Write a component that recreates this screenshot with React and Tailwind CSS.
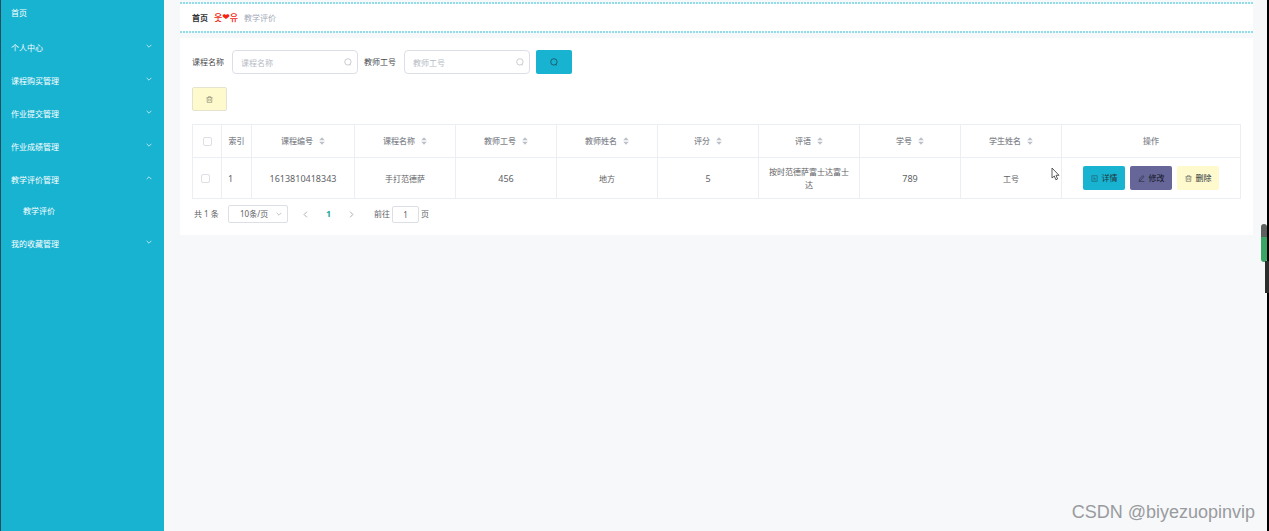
import React from 'react';

const menu = [
  { label: '个人中心' },
  { label: '课程购买管理' },
  { label: '作业提交管理' },
  { label: '作业成绩管理' },
  { label: '教学评价管理', children: ['教学评价'] },
  { label: '我的收藏管理' },
];

const columns = [
  { label: '课程编号', width: 'w-[103px]' },
  { label: '课程名称' },
  { label: '教师工号' },
  { label: '教师姓名' },
  { label: '评分' },
  { label: '评语' },
  { label: '学号' },
  { label: '学生姓名' },
];

const rows = [
  ['1613810418343', '手打范德萨', '456', '地方', '5', '按时范德萨富士达富士达', '789', '工号'],
];

function Chevron({ className, d = 'M1 3l4 4 4-4' }) {
  return (
    <svg viewBox="0 0 10 10" className={className} fill="none" stroke="currentColor" strokeWidth="1.4">
      <path d={d} />
    </svg>
  );
}

function SearchIcon({ className }) {
  return (
    <svg viewBox="0 0 16 16" className={className} fill="none" stroke="currentColor" strokeWidth="1.5">
      <circle cx="7.8" cy="7.8" r="6.4" />
      <path d="M11 12.5l2.5 2.2" />
    </svg>
  );
}

function TrashIcon() {
  return (
    <svg viewBox="0 0 16 16" className="size-[7px] shrink-0 opacity-80" fill="none" stroke="currentColor" strokeWidth="1.3">
      <path d="M1 4h14M5.5 4V1.5h5V4M2.8 4v10.5h10.4V4M6.3 7v4.5M9.7 7v4.5" />
    </svg>
  );
}

function DetailIcon() {
  return (
    <svg viewBox="0 0 16 16" className="size-[7px] shrink-0 opacity-70" fill="none" stroke="currentColor" strokeWidth="1.3">
      <path d="M2 1.5h12v13H2zM5.5 5h3M5.5 8h5M5.5 11h5" />
    </svg>
  );
}

function EditIcon() {
  return (
    <svg viewBox="0 0 16 16" className="size-[7px] shrink-0 opacity-80" fill="none" stroke="currentColor" strokeWidth="1.3">
      <path d="M10.5 1.5l3 2.2-7 8.3-3.5 1.3.4-3.6zM1.5 15h13" />
    </svg>
  );
}

function SortIcon() {
  return (
    <svg viewBox="0 0 6 8" className="h-2 w-1.5" fill="#bcc0c8">
      <path d="M3 .3l2.8 3H.2zM3 7.7l2.8-3H.2z" />
    </svg>
  );
}

function Sidebar() {
  return (
    <nav className="w-[164px] shrink-0 border-l border-[#1c4f5e] bg-[#17b3d1] text-white">
      <a href="#" className="block h-[31px] pl-2.5 leading-[26px]">首页</a>
      {menu.map((item) => (
        <div key={item.label}>
          <button type="button" className="flex h-[33px] w-full items-center justify-between pl-2.5 pr-3">
            {item.label}
            <Chevron
              className="mb-1 size-1.5 opacity-80"
              d={item.children ? 'M1 7l4-4 4 4' : 'M1 3l4 4 4-4'}
            />
          </button>
          {item.children?.map((child) => (
            <a key={child} href="#" className="block h-[31px] pl-[22px] leading-[30px]">{child}</a>
          ))}
        </div>
      ))}
    </nav>
  );
}

function Breadcrumb() {
  return (
    <div className="mt-0.5 bg-white">
      <div className="h-0.5 bg-[repeating-linear-gradient(90deg,#93dce8_0_2px,#eef9fb_2px_3px)]" />
      <div className="flex h-[27px] items-center gap-1.5 px-3">
        <a href="#" className="font-bold text-[#303133]">首页</a>
        <span className="flex items-center text-[9px] font-medium text-[#f5220c]">
          웃<span className='font-["DejaVu_Sans"]'>❤</span>유
        </span>
        <span className="text-[#a3a9b8]">教学评价</span>
      </div>
      <div className="h-0.5 bg-[repeating-linear-gradient(90deg,#93dce8_0_2px,#eef9fb_2px_3px)]" />
    </div>
  );
}

function SearchField({ label }) {
  return (
    <label className="flex items-center gap-2 text-[#48494c]">
      {label}
      <span className="relative">
        <input
          type="text"
          placeholder={label}
          className="block h-6 w-[126px] rounded-sm border border-[#dcdfe6] bg-white pl-2 pr-5 placeholder:text-[#b6bac3]"
        />
        <SearchIcon className="absolute right-1.5 top-2 size-2 text-[#b8bcc4]" />
      </span>
    </label>
  );
}

function Checkbox({ label }) {
  return (
    <input
      type="checkbox"
      aria-label={label}
      className="block size-[9px] appearance-none rounded-xs border border-[#dcdfe6] bg-white"
    />
  );
}

function ReviewTable() {
  return (
    <table className="mt-[13px] w-full table-fixed border-collapse text-center text-[#606266] [&_td]:border [&_td]:border-[#ebeef2] [&_th]:border [&_th]:border-[#ebeef2]">
      <thead>
        <tr className="h-[33px] text-[#85888f]">
          <th className="w-[29px] pl-2.5"><Checkbox label="全选" /></th>
          <th className="w-[30px] font-medium">索引</th>
          {columns.map((col) => (
            <th key={col.label} className={`font-medium ${col.width ?? ''}`}>
              <span className="flex items-center justify-center gap-1.5">
                {col.label}
                <SortIcon />
              </span>
            </th>
          ))}
          <th className="w-[179px] font-medium">操作</th>
        </tr>
      </thead>
      <tbody>
        {rows.map((row, i) => (
          <tr key={row[0]} className="h-[41px]">
            <td className="pl-2"><Checkbox label={`选择第${i + 1}行`} /></td>
            <td className="pl-1.5 text-left leading-[13px]"><span className="text-[9px]">{i + 1}</span></td>
            {row.map((cell, j) => (
              <td key={j} className="px-2 leading-[13px]">
                <span className={/^\d+$/.test(cell) ? 'text-[9px]' : ''}>{cell}</span>
              </td>
            ))}
            <td>
              <div className="flex justify-center gap-[5px] text-[#26303a]">
                <button type="button" className="flex h-6 w-[42px] items-center justify-center gap-1 rounded-xs bg-[#17b3d1]">
                  <DetailIcon />详情
                </button>
                <button type="button" className="flex h-6 w-[42px] items-center justify-center gap-1 rounded-xs bg-[#666699] text-[#15171f]">
                  <EditIcon />修改
                </button>
                <button type="button" className="flex h-6 w-[42px] items-center justify-center gap-1 rounded-xs bg-[#fffacd]">
                  <TrashIcon />删除
                </button>
              </div>
            </td>
          </tr>
        ))}
      </tbody>
    </table>
  );
}

function Pagination() {
  return (
    <div className="mt-1.5 flex h-[18px] items-center text-[#606266]">
      <span className="w-9 pl-0.5">共 1 条</span>
      <span className="relative">
        <select aria-label="每页条数" className="block h-[18px] w-[60px] appearance-none rounded-xs border border-[#dcdfe6] bg-white pl-[11px]">
          <option>10条/页</option>
        </select>
        <Chevron className="absolute right-1.5 top-1.5 size-1.5 text-[#b4b8c0]" />
      </span>
      <div className="ml-3.5 flex items-center gap-4">
        <button type="button" aria-label="上一页" className="text-[#a8abb2]">
          <Chevron className="size-[7px]" d="M7 1L3 5l4 4" />
        </button>
        <button type="button" className="w-[7px] text-[9px] font-bold text-[#17a99a]">1</button>
        <button type="button" aria-label="下一页" className="text-[#a8abb2]">
          <Chevron className="size-[7px]" d="M3 1l4 4-4 4" />
        </button>
      </div>
      <label className="ml-[19px] flex items-center gap-0.5">
        前往
        <input
          type="text"
          defaultValue="1"
          className="h-[17px] w-[27px] rounded-xs border border-[#dcdfe6] bg-white text-center"
        />
        页
      </label>
    </div>
  );
}

export default function App() {
  return (
    <div className='relative flex min-h-screen border-r-2 border-black bg-[#f6f8fa] font-["Noto_Sans","Noto_Sans_CJK_SC",sans-serif] text-[8px]'>
      <Sidebar />
      <main className="min-w-0 flex-1 pl-4 pr-3.5">
        <Breadcrumb />
        <section className="mt-[5px] bg-white p-3">
          <div className="flex items-center gap-1.5">
            <SearchField label="课程名称" />
            <SearchField label="教师工号" />
            <button type="button" aria-label="搜索" className="flex h-6 w-9 items-center justify-center rounded-xs bg-[#17b3d1] text-[#1d4754]">
              <SearchIcon className="size-2" />
            </button>
          </div>
          <button type="button" aria-label="批量删除" className="mt-[13px] flex h-6 w-[35px] items-center justify-center rounded-xs border border-[#e4e3cf] bg-[#fffacd] text-[#55564a]">
            <TrashIcon />
          </button>
          <ReviewTable />
          <Pagination />
        </section>
      </main>

      <div className="absolute right-0 top-56 h-[38px] w-1.5 rounded-full bg-[linear-gradient(#5c605f_0_13px,#3aa564_13px)]" />
      <div className="absolute -right-0.5 top-[261px] h-8 w-1 bg-[#2c2c2c]" />
      <svg viewBox="0 0 9 14" className="absolute right-[207px] top-[167px] h-3.5 w-[9px]" fill="#fff" stroke="#4a4a4a" strokeWidth="0.9">
        <path d="M1 1v10l2.3-2 1.6 3.8 1.7-.8L5 8.3h3z" />
      </svg>
      <div className='absolute bottom-[7px] right-3 font-["Liberation_Sans",sans-serif] text-[18px] leading-6 text-[#9a9b9e]'>
        CSDN @biyezuopinvip
      </div>
    </div>
  );
}
